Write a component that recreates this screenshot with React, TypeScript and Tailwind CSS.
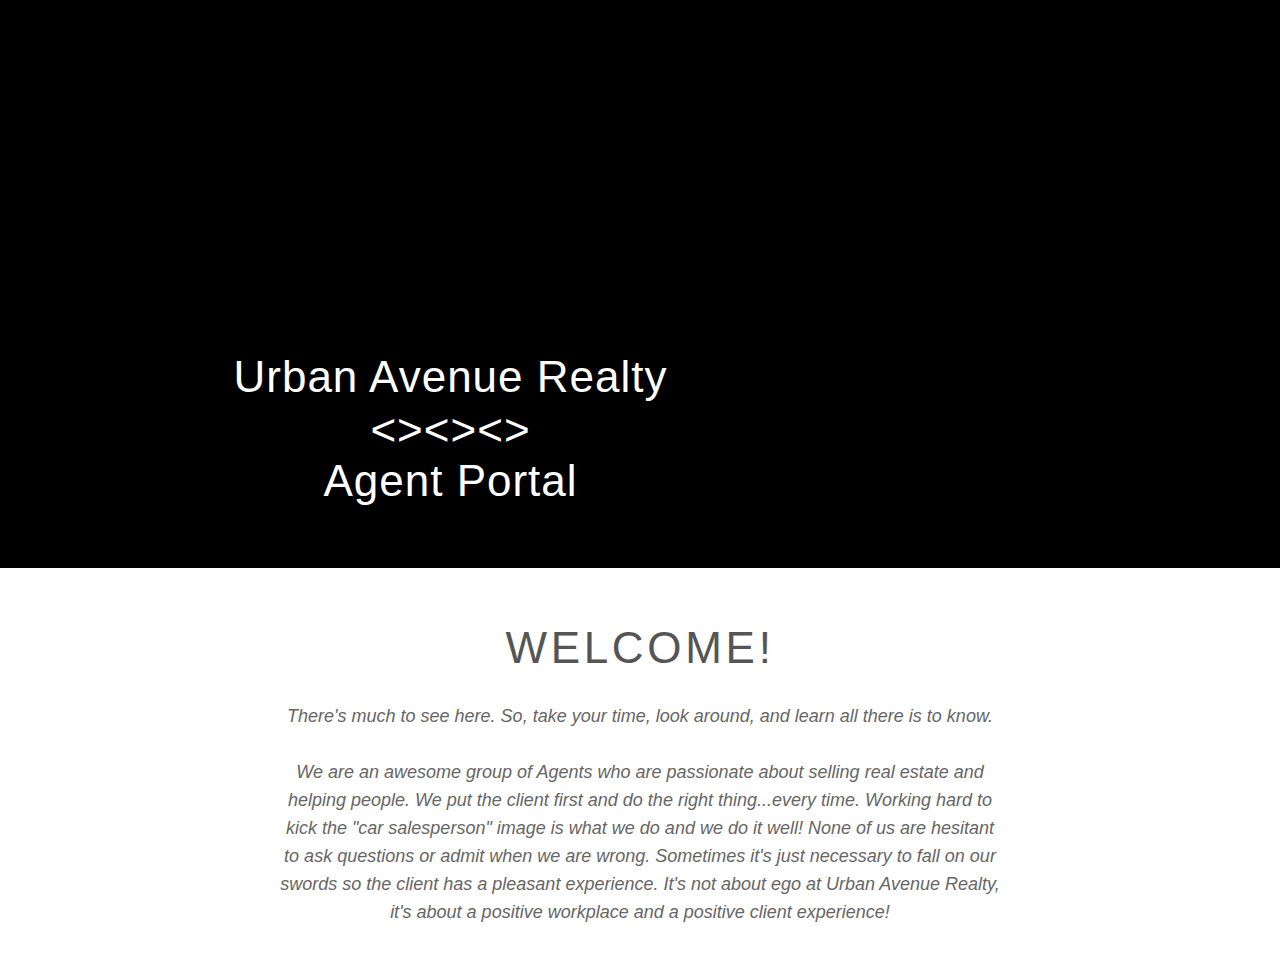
import React from "react";

export default function App() {
  return (
    <div className="w-[1280px] min-h-[960px] bg-white" style={{ fontFamily: '"Liberation Sans", Arial, sans-serif' }}>
      <header className="h-[568px] bg-black flex flex-col justify-end pb-[62px]">
        <div className="w-[901px] text-center text-white text-[44px] leading-[52px] tracking-[1px]">
          <div className="leading-[51px]">Urban Avenue Realty</div>
          <div className="pt-[3px] leading-[50px]">&lt;&gt;&lt;&gt;&lt;&gt;</div>
          <div className="leading-[51px]">Agent Portal</div>
        </div>
      </header>
      <main className="flex flex-col items-center pt-[54px]">
        <h1 className="text-[44px] leading-[52px] tracking-[3.7px] text-[#555555] font-normal">WELCOME!</h1>
        <div className="mt-[28px] w-[724px] text-center italic text-[18px] leading-[28px] text-[#666666]">
          <p>There's much to see here. So, take your time, look around, and learn all there is to know.</p>
          <br />
          <p>
            We are an awesome group of Agents who are passionate about selling real estate and helping people. We put the client first and do the right thing...every time. Working hard to kick the "car salesperson" image is what we do and we do it well! None of us are hesitant to ask questions or admit when we are wrong. Sometimes it's just necessary to fall on our swords so the client has a pleasant experience. It's not about ego at Urban Avenue Realty, it's about a positive workplace and a positive client experience!
          </p>
          <br />
          <p>!!! Take Note !!!</p>
          <br />
        </div>
      </main>
    </div>
  );
}
